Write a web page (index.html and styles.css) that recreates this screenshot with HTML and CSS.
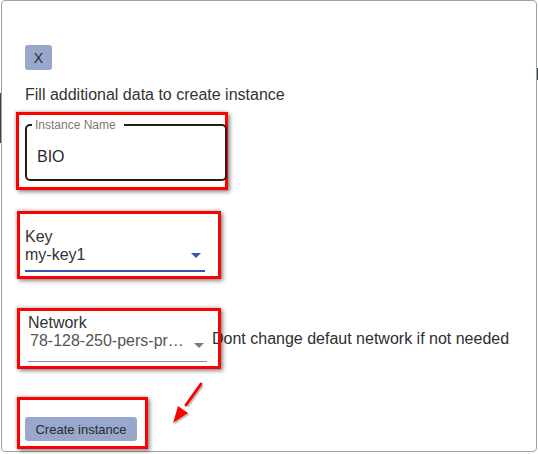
FILE: index.html
```html
<!DOCTYPE html>
<html>
<head>
<meta charset="utf-8">
<link rel="stylesheet" href="styles.css">
</head>
<body>
<div class="dialog">
  <button class="btn btn-close">X</button>
  <p class="intro">Fill additional data to create instance</p>

  <div class="annot annot-name">
    <div class="outlined">
      <span class="outlined-label">Instance Name</span>
      <span class="outlined-value">BIO</span>
    </div>
  </div>

  <div class="annot annot-key">
    <div class="field-label">Key</div>
    <div class="select select-focused">
      <span class="select-value">my-key1</span>
      <span class="caret caret-blue"></span>
    </div>
  </div>

  <div class="network-row">
    <div class="annot annot-net">
      <div class="field-label">Network</div>
      <div class="select select-plain">
        <span class="select-value select-muted">78-128-250-pers-proj-network</span>
        <span class="caret caret-gray"></span>
      </div>
    </div>
    <span class="hint">Dont change defaut network if not needed</span>
  </div>

  <div class="annot annot-create">
    <button class="btn btn-create">Create instance</button>
  </div>

  <svg class="pointer" width="40" height="50" viewBox="0 0 40 50">
    <g transform="translate(1.5,1.5)" fill="#9a9a9a" opacity="0.6">
      <line x1="30" y1="3" x2="15" y2="24" stroke="#9a9a9a" stroke-width="3"/>
      <polygon points="2,42 7,25 17,32"/>
    </g>
    <line x1="30" y1="3" x2="15" y2="24" stroke="#ff0000" stroke-width="3" stroke-linecap="round"/>
    <polygon points="2,42 7,25 17,32" fill="#ff0000"/>
  </svg>
</div>
</body>
</html>
```

FILE: styles.css
```css
html, body {
  margin: 0;
  padding: 0;
}
body {
  width: 538px;
  height: 454px;
  background-color: #ffffff;
  background-image:
    linear-gradient(#37474f, #37474f),
    linear-gradient(#37474f, #37474f);
  background-repeat: no-repeat;
  background-size: 1px 50px, 1px 12px;
  background-position: 0 93px, 537px 68px;
  font-family: "Liberation Sans", Arial, sans-serif;
  color: #333333;
}
.dialog {
  position: relative;
  box-sizing: border-box;
  width: 536px;
  height: 452px;
  margin-left: 1px;
  border: 1px solid #a2a2a2;
  border-radius: 4px;
  background: #ffffff;
  padding: 44px 0 0 15px;
  display: flex;
  flex-direction: column;
  align-items: flex-start;
}
.btn {
  font-family: "Liberation Sans", Arial, sans-serif;
  font-size: 13px;
  color: #2b2b2b;
  background: #98a7cc;
  border: none;
  border-radius: 3px;
  padding: 0;
  cursor: pointer;
}
.btn-close {
  margin-left: 8px;
  width: 27px;
  height: 25px;
  font-size: 14px;
}
.intro {
  margin: 16px 0 0 8px;
  font-size: 16px;
  line-height: 18px;
}
.annot {
  position: relative;
  z-index: 1;
  box-sizing: border-box;
  border: 3px solid #ff0000;
  box-shadow: 2px 2px 4px rgba(0, 0, 0, 0.45), -1px -1px 3px rgba(0, 0, 0, 0.2);
}
.annot-name {
  margin: 8px 0 0 -1px;
  width: 212px;
  padding: 9px 0 6px 6px;
}
.outlined {
  position: relative;
  box-sizing: border-box;
  width: 202px;
  height: 57px;
  border: 2px solid #1f1f1f;
  border-radius: 5px;
  padding: 22px 0 0 10px;
}
.outlined-label {
  position: absolute;
  top: -8px;
  left: 5px;
  padding: 0 8px 0 3px;
  background: #ffffff;
  font-size: 12px;
  line-height: 14px;
  color: #7a7a7a;
}
.outlined-value {
  display: block;
  font-size: 16px;
  line-height: 18px;
  color: #2a2a2a;
}
.annot-key {
  margin-top: 21px;
  width: 204px;
  height: 68px;
  padding: 14px 0 0 5px;
}
.field-label {
  font-size: 16px;
  line-height: 18px;
  color: #333333;
}
.select {
  position: relative;
  box-sizing: border-box;
  width: 180px;
}
.select-focused {
  height: 26px;
  border-bottom: 2px solid #3f51b5;
}
.select-value {
  display: block;
  font-size: 16px;
  line-height: 18px;
  white-space: nowrap;
  overflow: hidden;
  text-overflow: ellipsis;
  width: 152px;
}
.caret {
  position: absolute;
  top: 7px;
  right: 4px;
  width: 0;
  height: 0;
  border-left: 5px solid transparent;
  border-right: 5px solid transparent;
}
.caret-blue {
  border-top: 5px solid #3f51b5;
}
.caret-gray {
  top: 11px;
  right: 3px;
  border-top: 5px solid #7b7b7b;
}
.network-row {
  margin-top: 29px;
  display: flex;
  align-items: center;
}
.annot-net {
  width: 204px;
  height: 61px;
  padding: 3px 0 0 8px;
  margin-right: -9px;
}
.select-plain {
  width: 179px;
  height: 30px;
  border-bottom: 1px solid #8c8c8c;
}
.select-muted {
  padding-left: 2px;
  color: #555555;
  width: 157px;
}
.hint {
  font-size: 16px;
  line-height: 18px;
  color: #2f2f2f;
}
.annot-create {
  margin-top: 28px;
  width: 131px;
  height: 52px;
  padding: 17px 0 0 5px;
}
.btn-create {
  width: 112px;
  height: 24px;
}
.pointer {
  position: absolute;
  left: 169px;
  top: 380px;
  overflow: visible;
}
```
